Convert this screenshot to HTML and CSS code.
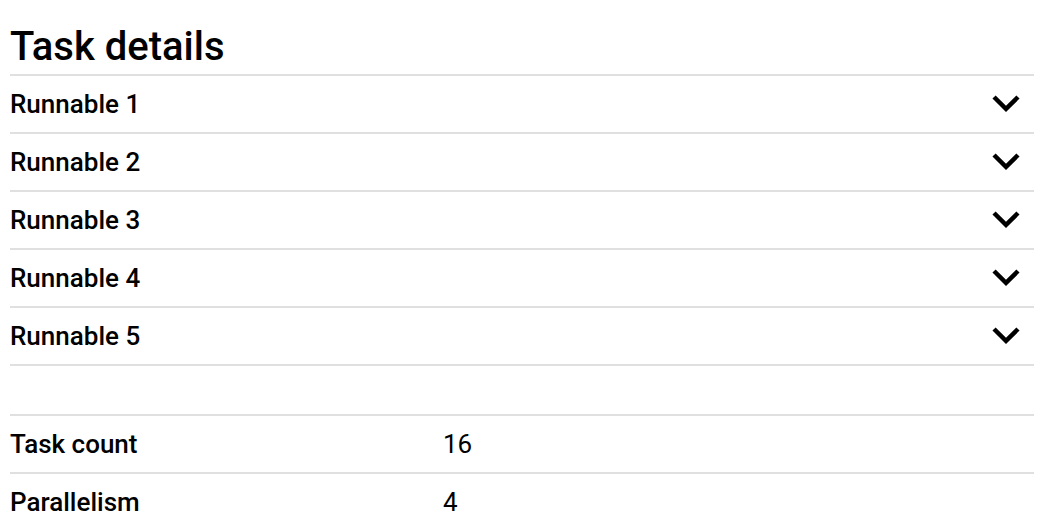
FILE: index.html
```html
<!DOCTYPE html>
<html lang="en">
<head>
    <meta charset="UTF-8">
    <title>Task details</title>
    <link rel="stylesheet" href="styles.css">
</head>
<body>
    <div class="container">
        <h1 class="title">Task details</h1>

        <div class="runnables">
            <div class="runnable">
                <span class="runnable-name">Runnable 1</span>
                <svg class="chevron" viewBox="5.8 8.4 12.4 7.8" preserveAspectRatio="none"><path d="M16.59 8.59L12 13.17 7.41 8.59 6 10l6 6 6-6z"/></svg>
            </div>
            <div class="runnable">
                <span class="runnable-name">Runnable 2</span>
                <svg class="chevron" viewBox="5.8 8.4 12.4 7.8" preserveAspectRatio="none"><path d="M16.59 8.59L12 13.17 7.41 8.59 6 10l6 6 6-6z"/></svg>
            </div>
            <div class="runnable">
                <span class="runnable-name">Runnable 3</span>
                <svg class="chevron" viewBox="5.8 8.4 12.4 7.8" preserveAspectRatio="none"><path d="M16.59 8.59L12 13.17 7.41 8.59 6 10l6 6 6-6z"/></svg>
            </div>
            <div class="runnable">
                <span class="runnable-name">Runnable 4</span>
                <svg class="chevron" viewBox="5.8 8.4 12.4 7.8" preserveAspectRatio="none"><path d="M16.59 8.59L12 13.17 7.41 8.59 6 10l6 6 6-6z"/></svg>
            </div>
            <div class="runnable">
                <span class="runnable-name">Runnable 5</span>
                <svg class="chevron" viewBox="5.8 8.4 12.4 7.8" preserveAspectRatio="none"><path d="M16.59 8.59L12 13.17 7.41 8.59 6 10l6 6 6-6z"/></svg>
            </div>
        </div>

        <table class="summary">
            <tbody>
                <tr>
                    <th>Task count</th>
                    <td>16</td>
                </tr>
                <tr>
                    <th>Parallelism</th>
                    <td>4</td>
                </tr>
            </tbody>
        </table>
    </div>
</body>
</html>
```

FILE: styles.css
```css
/* Base */
body {
    margin: 0;
    font-family: Roboto, "Liberation Sans", Arial, sans-serif;
    color: #000;
    background: #fff;
}

.container {
    width: 1024px;
    margin-left: 10px;
}

.title {
    font-size: 40px;
    font-weight: 500;
    margin: 23px 0 0;
    padding-bottom: 4px;
    border-bottom: 2px solid #e0e0e0;
}

/* Runnable list */
.runnable {
    display: flex;
    align-items: center;
    justify-content: space-between;
    height: 56px;
    border-bottom: 2px solid #e0e0e0;
}

.runnable-name {
    font-size: 26px;
    font-weight: 500;
}

.chevron {
    width: 28px;
    height: 17.5px;
    margin-right: 14px;
    fill: #000;
}

/* Summary table */
.summary {
    width: 100%;
    border-collapse: collapse;
    margin-top: 48px;
    font-size: 26px;
}

.summary th,
.summary td {
    height: 56px;
    padding: 0;
    text-align: left;
    border-top: 2px solid #e0e0e0;
}

.summary th {
    width: 433px;
    font-weight: 500;
}

.summary td {
    font-weight: 400;
}
```
